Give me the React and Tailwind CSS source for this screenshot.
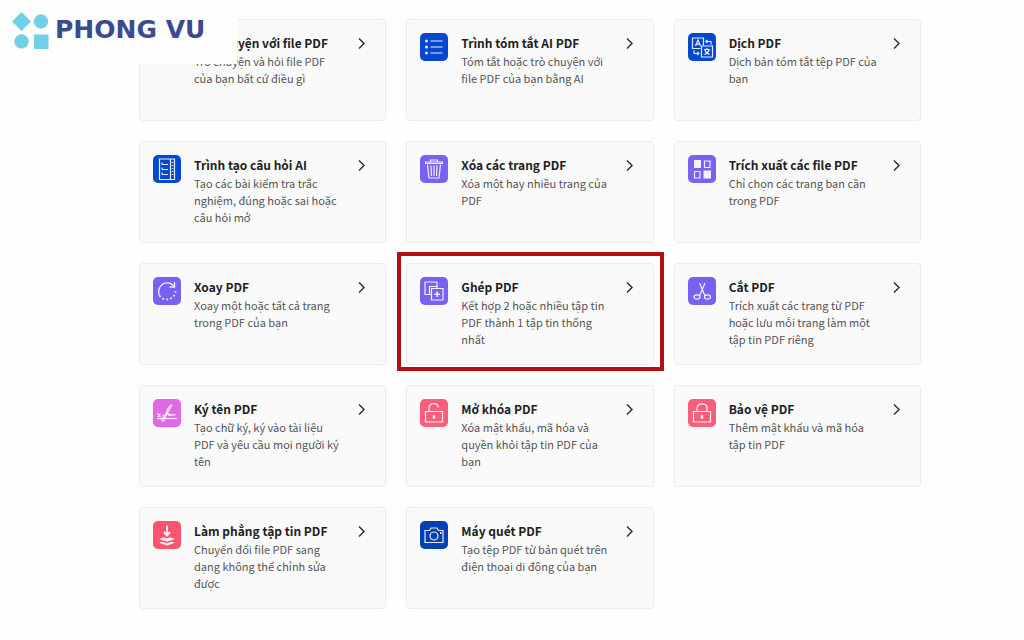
import React from 'react';

const ICONS = {
  chat: (
    <path d="M7 8h14v10h-8l-4 3v-3H7z" />
  ),
  summary: (
    <>
      <path d="M10.500 8h12M10.500 14h12M10.500 20h12" />
      <g fill="currentColor" stroke="none">
        <circle cx="6.500" cy="8" r="1.500" />
        <circle cx="6.500" cy="14" r="1.500" />
        <circle cx="6.500" cy="20" r="1.500" />
      </g>
    </>
  ),
  translate: (
    <>
      <path d="M12.500 15.500H4.500V5h11v7.500" />
      <path d="M13.500 13h11v11h-11z" />
      <path d="M7.500 13l2.500-6 2.500 6M8.400 11.200h3.200" />
      <path d="M16 16.500h6M19 15v1.500M17 17c.5 2 2 3.500 4.500 4.500M21 17c-.5 2-2 3.500-4.500 4.500" />
      <path d="M23 11.500V8.500h-5M19.500 6.800L17.800 8.500l1.700 1.700" />
      <path d="M6 17.500v3h5M9.300 18.800l1.700 1.700-1.700 1.700" />
    </>
  ),
  quiz: (
    <>
      <path d="M6.500 4h15v20.500h-15zM17.500 4v20.500" />
      <path d="M9 9.500h6M9 14.500h6M9 19.500h6" />
      <path d="M18.800 7.500h1.500M18.800 10.500h1.500M18.800 13.500h1.500M18.800 16.500h1.500M18.800 19.500h1.500" />
      <path d="M9 7.500v2M9 12.500v2M9 17.500v2" />
    </>
  ),
  trash: (
    <>
      <path d="M5.500 8.500h17V7h-17zM10.500 7V5h7v2" />
      <path d="M7.500 9.500L9 23h10l1.500-13.500" />
      <path d="M11 10.500l.5 10.500M14 10.500V21M17 10.500L16.500 21" />
    </>
  ),
  extract: (
    <>
      <path d="M16.500 6h5.500v6.500h-5.500zM6.500 16.500h5.500v6.500H6.500z" />
      <g fill="currentColor" stroke="none">
        <rect x="6" y="5" width="7" height="8" />
        <rect x="15.500" y="15.500" width="7.500" height="8" />
      </g>
    </>
  ),
  rotate: (
    <>
      <path d="M6.500 18.500A8.700 8.700 0 0 1 20.500 8.500M21.500 5v5h-5" strokeWidth="1.400" />
      <path d="M6.500 18.500a8.700 8.700 0 0 0 16-5" strokeWidth="1.600" strokeDasharray="1.800 2.200" />
    </>
  ),
  merge: (
    <>
      <path d="M11.500 17.500H5V5h12v6.500" />
      <path d="M9.500 17.500V9.500h7.500" />
      <path d="M11.500 11.500h11.500v11.500H11.500z" />
      <path d="M17.200 14.500v5.500M14.500 17.200H20" strokeWidth="1.600" />
    </>
  ),
  cut: (
    <>
      <path d="M11.500 6l5.500 13M17 6l-5.500 13" />
      <ellipse cx="9" cy="20" rx="3" ry="2.200" />
      <ellipse cx="19.500" cy="20" rx="3" ry="2.200" />
    </>
  ),
  sign: (
    <>
      <path d="M4 19.500h20" />
      <path d="M4.500 14.500l3 3.500M7.500 14.500l-3 3.500" />
      <path d="M9 17c4 0 8.500-7 9.500-11-3 1-6 8-6.500 13-.5 3-2.500 4-3 2.500-.5-2 4-5 6.500-7.500-.8 2 0 3 1.500 1.500.5 1.500 1.500 1 2.500 0 .6 1 1.800.8 3 0" />
    </>
  ),
  unlock: (
    <>
      <path d="M5.500 12.500h17v10.500h-17z" />
      <path d="M9 12.500V9c0-5.500 8.500-6 9.500-.5" />
      <path d="M14 16.200v3.500" strokeWidth="2.400" />
    </>
  ),
  lock: (
    <>
      <path d="M5.500 12.500h17v10.500h-17z" />
      <path d="M9 12.500V9c0-5.500 10-5.500 10 0v3.500" />
      <path d="M14 16.200v3.500" strokeWidth="2.400" />
    </>
  ),
  flatten: (
    <>
      <path d="M14 4.500v9M11 11l3 3.500 3-3.500" strokeWidth="2" />
      <g fill="currentColor" stroke="none">
        <path d="M6 18l5-1.800 3 1.300 3-1.300 5 1.800-8 2.700z" />
        <path d="M6 21.800l3-1 5 1.400 5-1.400 3 1-8 2.700z" />
      </g>
    </>
  ),
  scan: (
    <>
      <path d="M5 9.500h4.500l1.500-2.500h6l1.500 2.500H23v12H5z" />
      <circle cx="14" cy="15" r="4" />
      <path d="M20 12h1.500" strokeWidth="1.800" />
    </>
  ),
};

const TOOLS = [
  { icon: 'chat', color: 'bg-[#0548cf]', title: 'Trò chuyện với file PDF', text: 'Trò chuyện và hỏi file PDF của bạn bất cứ điều gì' },
  { icon: 'summary', color: 'bg-[#0548cf]', title: 'Trình tóm tắt AI PDF', text: 'Tóm tắt hoặc trò chuyện với file PDF của bạn bằng AI' },
  { icon: 'translate', color: 'bg-[#0548cf]', title: 'Dịch PDF', text: 'Dịch bản tóm tắt tệp PDF của bạn' },
  { icon: 'quiz', color: 'bg-[#0548cf]', title: 'Trình tạo câu hỏi AI', text: 'Tạo các bài kiểm tra trắc nghiệm, đúng hoặc sai hoặc câu hỏi mở' },
  { icon: 'trash', color: 'bg-[#7961f2]', title: 'Xóa các trang PDF', text: 'Xóa một hay nhiều trang của PDF' },
  { icon: 'extract', color: 'bg-[#7961f2]', title: 'Trích xuất các file PDF', text: 'Chỉ chọn các trang bạn cần trong PDF' },
  { icon: 'rotate', color: 'bg-[#7961f2]', title: 'Xoay PDF', text: 'Xoay một hoặc tất cả trang trong PDF của bạn' },
  { icon: 'merge', color: 'bg-[#7961f2]', title: 'Ghép PDF', text: 'Kết hợp 2 hoặc nhiều tập tin PDF thành 1 tập tin thống nhất', highlighted: true },
  { icon: 'cut', color: 'bg-[#7961f2]', title: 'Cắt PDF', text: 'Trích xuất các trang từ PDF hoặc lưu mỗi trang làm một tập tin PDF riêng' },
  { icon: 'sign', color: 'bg-[#e069e4]', title: 'Ký tên PDF', text: 'Tạo chữ ký, ký vào tài liệu PDF và yêu cầu mọi người ký tên' },
  { icon: 'unlock', color: 'bg-[#f95f7d]', title: 'Mở khóa PDF', text: 'Xóa mật khẩu, mã hóa và quyền khỏi tập tin PDF của bạn' },
  { icon: 'lock', color: 'bg-[#f95f7d]', title: 'Bảo vệ PDF', text: 'Thêm mật khẩu và mã hóa tập tin PDF' },
  { icon: 'flatten', color: 'bg-[#fb5372]', title: 'Làm phẳng tập tin PDF', text: 'Chuyển đổi file PDF sang dạng không thể chỉnh sửa được' },
  { icon: 'scan', color: 'bg-[#0540b4]', title: 'Máy quét PDF', text: 'Tạo tệp PDF từ bản quét trên điện thoại di động của bạn' },
];

function ToolIcon({ name, color }) {
  return (
    <span className={`mr-[13px] size-7 shrink-0 rounded-[5px] text-white/90 ${color}`}>
      <svg viewBox="0 0 28 28" className="size-7" fill="none" stroke="currentColor" strokeWidth="1.200" aria-hidden="true">
        {ICONS[name]}
      </svg>
    </span>
  );
}

function ToolCard({ tool }) {
  return (
    <a
      href="#"
      className="relative flex min-h-[102px] items-start rounded-sm border border-[#ebebeb] bg-[#fafafa] p-[13px]"
    >
      <ToolIcon name={tool.icon} color={tool.color} />
      <div className="w-[150px]">
        <h2 className="text-[12px] leading-5 font-bold text-[#222]">{tool.title}</h2>
        <p className="text-[11px] leading-[17px] text-[#555]">{tool.text}</p>
      </div>
      <svg viewBox="0 0 20 20" className="ml-auto size-5 shrink-0 text-[#333]" fill="none" stroke="currentColor" strokeWidth="1.500" aria-hidden="true">
        <path d="M7 5.500l5 5-5 5" />
      </svg>
      {tool.highlighted && (
        <span className="pointer-events-none absolute -top-3 -right-[11px] -bottom-[7px] -left-2.5 border-4 border-[#b00f14]" />
      )}
    </a>
  );
}

function Logo() {
  return (
    <a href="#" className="absolute top-0 left-0 flex h-16 w-[237px] items-center gap-1.5 bg-[#fefefe] pb-1 pl-3">
      <svg viewBox="0 0 37 37" className="size-[37px] shrink-0" fill="#72cfe8" aria-hidden="true">
        <path d="M9.500 0l9.500 9.500-9.500 9.500L0 9.500z" />
        <circle cx="29" cy="9.500" r="7.200" />
        <circle cx="9.500" cy="29.500" r="7.200" />
        <rect x="22" y="22.500" width="14.500" height="14.500" />
      </svg>
      <span className="font-['DejaVu_Sans',sans-serif] text-[25px] leading-6 font-bold whitespace-nowrap text-[#3b4b92]">PHONG VU</span>
    </a>
  );
}

export default function App() {
  return (
    <div className="relative min-h-screen bg-[#fefefe] font-['Noto_Sans_CJK_SC','Noto_Sans',sans-serif]">
      <main className="pt-[19px] pb-8 pl-9">
        <div className="mx-auto grid max-w-[782px] grid-cols-3 gap-5">
          {TOOLS.map((tool) => (
            <ToolCard key={tool.title} tool={tool} />
          ))}
        </div>
      </main>
      <Logo />
    </div>
  );
}
